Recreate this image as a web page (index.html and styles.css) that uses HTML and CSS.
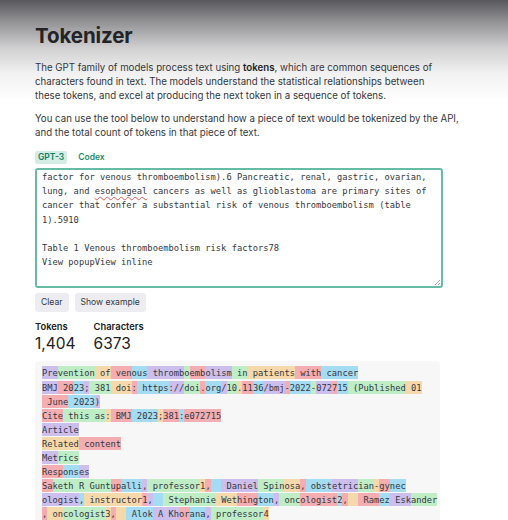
FILE: index.html
```html
<!DOCTYPE html>
<html>
<head>
<meta charset="utf-8">
<link rel="stylesheet" href="styles.css">
</head>
<body>
<div class="shade"></div>
<main class="page">
  <h1 class="title">Tokenizer</h1>
  <p class="para">The GPT family of models process text using <b>tokens</b>, which are common sequences of characters found in text. The models understand the statistical relationships between these tokens, and excel at producing the next token in a sequence of tokens.</p>
  <p class="para para-wide">You can use the tool below to understand how a piece of text would be tokenized by the API, and the total count of tokens in that piece of text.</p>

  <div class="tabs">
    <span class="tab active">GPT-3</span>
    <span class="tab">Codex</span>
  </div>

  <div class="input"><div class="iline">factor for venous thromboembolism).6 Pancreatic, renal, gastric, ovarian,</div><div class="iline">lung, and <span class="misspell">esophageal</span> cancers as well as glioblastoma are primary sites of</div><div class="iline">cancer that confer a substantial risk of venous thromboembolism (table</div><div class="iline">1).5910</div><div class="iline"> </div><div class="iline">Table 1 Venous thromboembolism risk factors78</div><div class="iline">View popupView inline</div><span class="grip"></span></div>

  <div class="buttons">
    <button class="btn">Clear</button>
    <button class="btn">Show example</button>
  </div>

  <div class="stats">
    <div class="stat">
      <div class="stat-label">Tokens</div>
      <div class="stat-value">1,404</div>
    </div>
    <div class="stat">
      <div class="stat-label">Characters</div>
      <div class="stat-value">6373</div>
    </div>
  </div>

  <div class="output">
    <div class="oline"><span class="p">Pre</span><span class="g">vention</span><span class="o"> of</span><span class="r"> ven</span><span class="b">ous</span><span class="p"> thromb</span><span class="g">o</span><span class="r">emb</span><span class="p">olism</span><span class="g"> in</span><span class="o"> patients</span><span class="r"> with</span><span class="b"> cancer</span></div>
    <div class="oline"><span class="p">BMJ</span><span class="r"> 20</span><span class="b">23</span><span class="p">;</span><span class="g"> 381</span><span class="o"> doi</span><span class="r">:</span><span class="b"> https</span><span class="p">://</span><span class="g">doi</span><span class="r">.</span><span class="b">org</span><span class="p">/</span><span class="g">10</span><span class="o">.</span><span class="r">11</span><span class="b">36</span><span class="p">/bmj</span><span class="r">-</span><span class="b">2022</span><span class="g">-</span><span class="p">072</span><span class="r">7</span><span class="b">15</span><span class="g"> (Published</span><span class="o"> 01</span></div>
    <div class="oline"><span class="r"> June</span><span class="b"> 2023</span><span class="p">)</span></div>
    <div class="oline"><span class="r">Cite</span><span class="g"> this</span><span class="g"> as</span><span class="o">:</span><span class="r"> BMJ</span><span class="b"> 2023</span><span class="o">;</span><span class="r">381</span><span class="b">:</span><span class="r">e072715</span></div>
    <div class="oline"><span class="p">Article</span></div>
    <div class="oline"><span class="o">Related</span><span class="r"> content</span></div>
    <div class="oline"><span class="p">Met</span><span class="g">rics</span></div>
    <div class="oline"><span class="r">Resp</span><span class="b">ons</span><span class="p">es</span></div>
    <div class="oline"><span class="r">Sa</span><span class="g">keth R Gunt</span><span class="r">up</span><span class="b">alli</span><span class="p">,</span><span class="g"> professor</span><span class="o">1</span><span class="r">,</span><span class="b">  </span><span class="p"> Daniel</span><span class="g"> Spin</span><span class="o">osa</span><span class="r">,</span><span class="b"> obst</span><span class="p">etric</span><span class="g">ian</span><span class="o">-</span><span class="r">gy</span><span class="b">nec</span></div>
    <div class="oline"><span class="p">ologist</span><span class="b">,</span><span class="o"> instructor</span><span class="r">1</span><span class="p">,</span><span class="b">  </span><span class="g"> Stephanie</span><span class="o"> Wet</span><span class="r">hing</span><span class="b">ton</span><span class="p">,</span><span class="g"> onc</span><span class="r">ologist</span><span class="b">2</span><span class="r">,</span><span class="o">  </span><span class="r"> Ram</span><span class="b">ez</span><span class="p"> Esk</span><span class="g">ander</span></div>
    <div class="oline"><span class="r">,</span><span class="o"> on</span><span class="g">cologist</span><span class="o">3</span><span class="r">,</span><span class="o">  </span><span class="b"> Alok</span><span class="p"> A</span><span class="p"> Kh</span><span class="r">or</span><span class="b">ana</span><span class="p">,</span><span class="g"> professor</span><span class="o">4</span></div>
    <div class="oline"> </div>
  </div>
</main>
</body>
</html>
```

FILE: styles.css
```css
html, body {
  margin: 0;
  padding: 0;
  background: #ffffff;
}

body {
  font-family: Inter, "Noto Sans", "Liberation Sans", sans-serif;
  color: #353740;
  overflow: hidden;
  height: 520px;
}

.shade {
  position: absolute;
  left: 0;
  top: 0;
  width: 100%;
  height: 100px;
  pointer-events: none;
  background: linear-gradient(to bottom,
    rgba(40, 40, 46, 0.78) 0px,
    rgba(40, 40, 46, 0.5) 22px,
    rgba(40, 40, 46, 0.22) 48px,
    rgba(40, 40, 46, 0.07) 72px,
    rgba(40, 40, 46, 0) 100px);
  z-index: 5;
}

.page {
  width: 405px;
  padding: 0 0 0 35px;
}

.title {
  margin: 0;
  padding-top: 23px;
  font-size: 20.5px;
  line-height: 26px;
  font-weight: 700;
  color: #202123;
  letter-spacing: -0.1px;
}

.para {
  margin: 0;
  font-size: 9.7px;
  line-height: 13.8px;
  color: #353740;
  width: 410px;
}

.para-wide {
  width: 428px;
}

.title + .para {
  margin-top: 12px;
}

.para + .para {
  margin-top: 10px;
}

.para b {
  font-weight: 600;
  color: #202123;
}

.tabs {
  display: flex;
  gap: 8px;
  margin-top: 11px;
  align-items: center;
}

.tab {
  font-size: 8.5px;
  font-weight: 600;
  color: #1a8c6c;
  height: 13px;
  line-height: 13px;
  padding: 0 3px;
  border-radius: 2px;
}

.tab.active {
  background: #d3ede4;
  color: #16805f;
}

.input {
  position: relative;
  margin-top: 4px;
  height: 116px;
  border: 2px solid #66bba5;
  border-radius: 3px;
  padding: 0 0 0 5px;
  box-sizing: content-box;
  width: 399px;
  font-family: "DejaVu Sans Mono", "Liberation Mono", monospace;
  font-size: 8.75px;
  color: #353740;
  overflow: hidden;
}

.iline {
  white-space: pre;
  height: 14.2px;
  line-height: 14.2px;
}

.misspell {
  text-decoration: underline wavy #e05555;
  text-decoration-thickness: 1px;
  text-underline-offset: 1.5px;
}

.grip {
  position: absolute;
  right: 1px;
  bottom: 1px;
  width: 5px;
  height: 5px;
  background: linear-gradient(135deg, transparent 45%, #9aa 45%, #9aa 55%, transparent 55%, transparent 75%, #9aa 75%, #9aa 85%, transparent 85%);
}

.buttons {
  display: flex;
  gap: 6px;
  margin-top: 5px;
}

.btn {
  font-family: Inter, "Noto Sans", "Liberation Sans", sans-serif;
  font-size: 8.6px;
  color: #353740;
  background: #ececf1;
  border: none;
  border-radius: 3px;
  height: 19px;
  padding: 0 6px;
  margin: 0;
}

.stats {
  display: flex;
  gap: 18px;
  margin-top: 9px;
}

.stat-label {
  font-size: 9.4px;
  font-weight: 600;
  color: #202123;
  line-height: 12px;
}

.stat-value {
  font-size: 15.5px;
  line-height: 21px;
  font-weight: 400;
  color: #202123;
}

.output {
  margin-top: 7px;
  background: #f7f7f8;
  border-radius: 4px;
  padding: 5px 0 4px 7px;
  width: 398px;
  font-family: "DejaVu Sans Mono", "Liberation Mono", monospace;
  font-size: 8.75px;
  color: #353740;
}

.oline {
  white-space: pre;
  height: 14.1px;
  line-height: 14.1px;
}

.oline span {
  padding: 1.5px 0;
}

.p { background: rgba(107, 64, 216, 0.3); }
.g { background: rgba(104, 222, 122, 0.4); }
.o { background: rgba(244, 172, 54, 0.4); }
.r { background: rgba(239, 65, 70, 0.4); }
.b { background: rgba(39, 181, 234, 0.4); }
```
